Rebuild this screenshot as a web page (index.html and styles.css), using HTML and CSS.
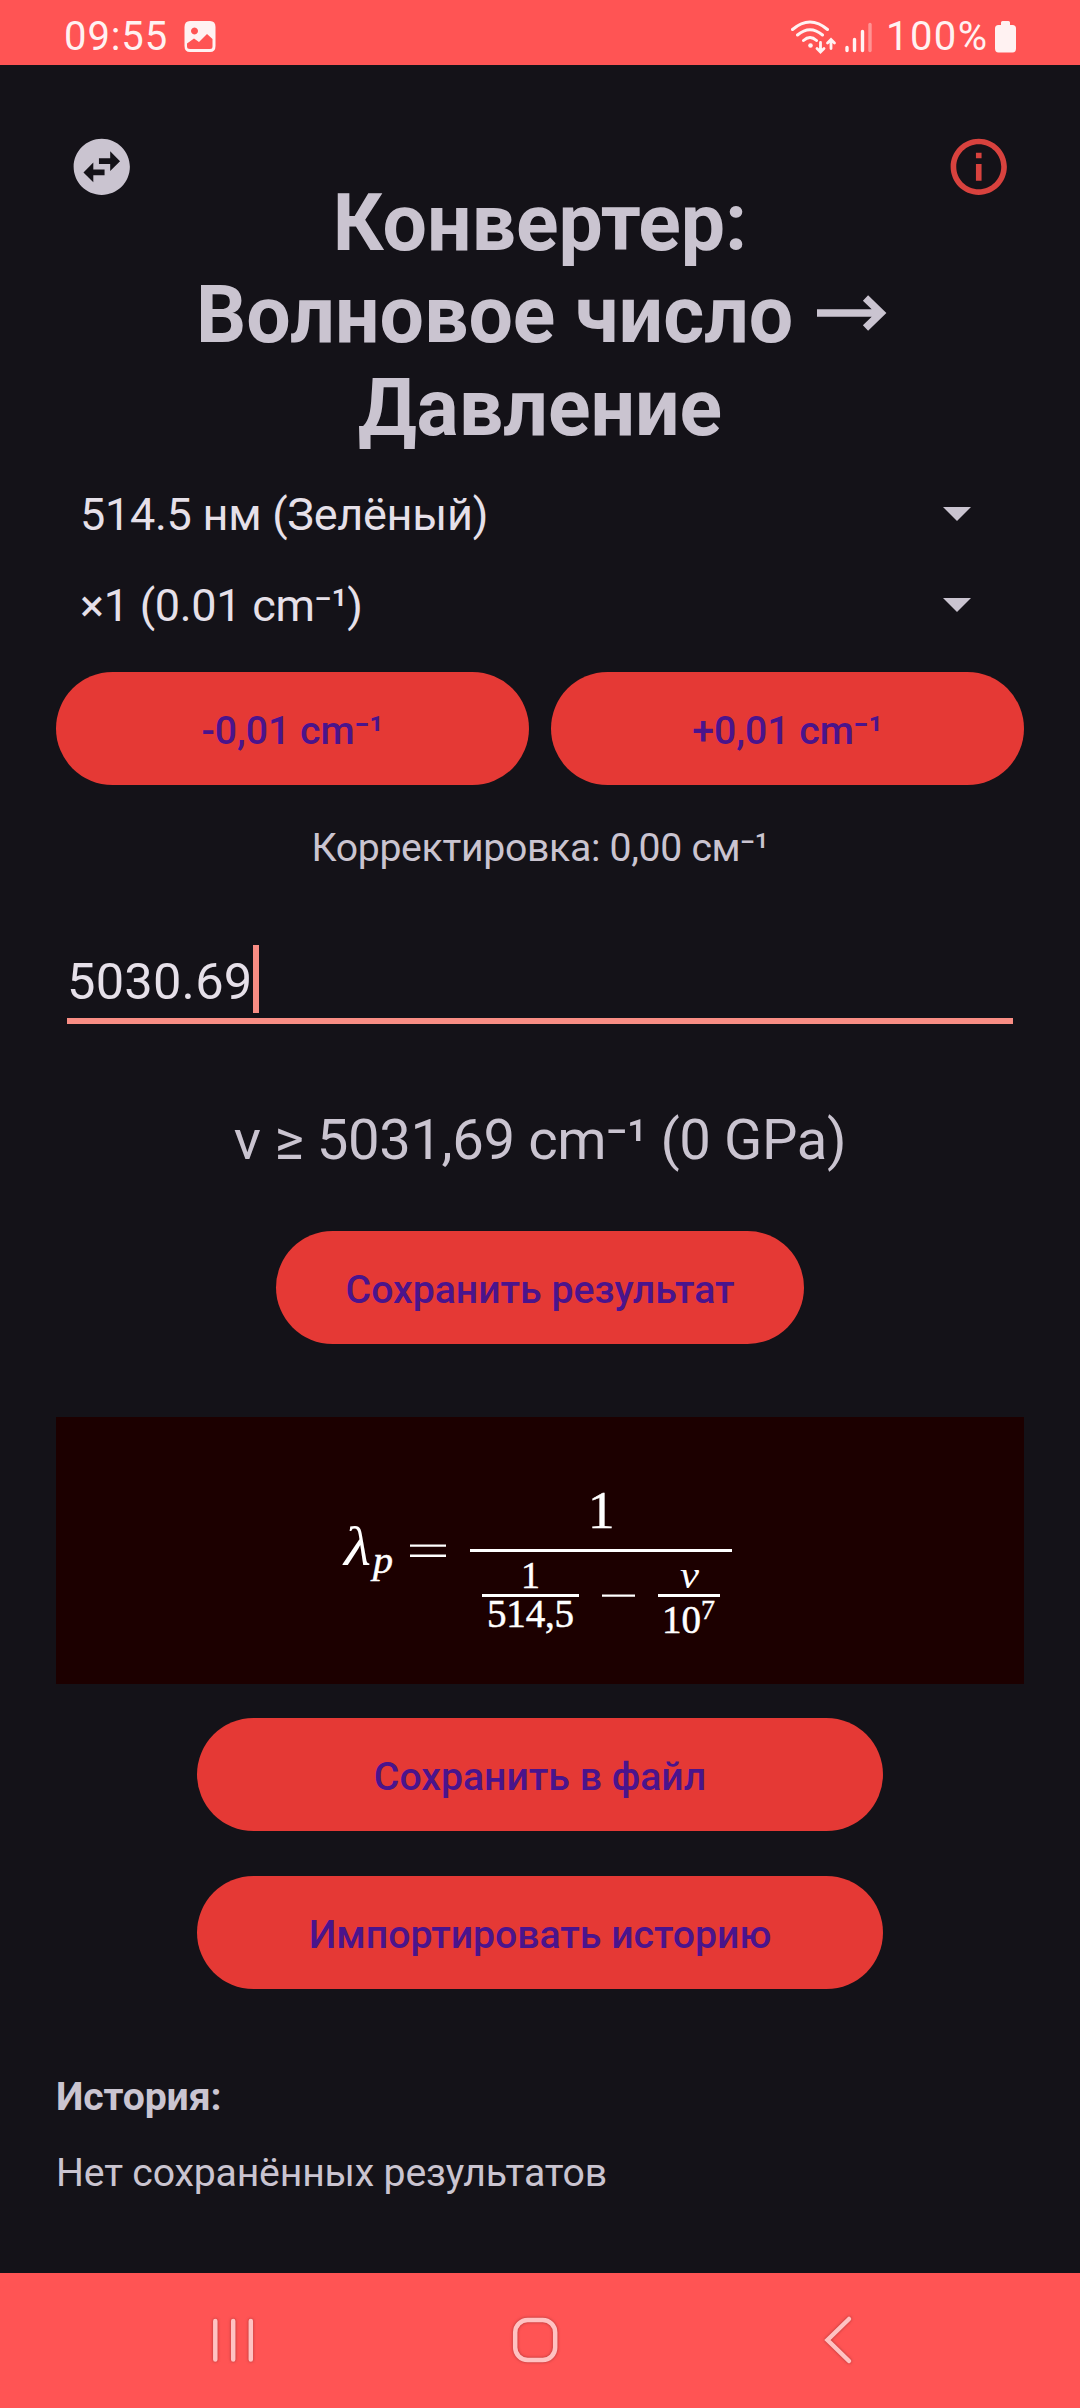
FILE: index.html
```html
<!DOCTYPE html>
<html lang="ru">
<head>
<meta charset="utf-8">
<title>Конвертер</title>
<link rel="stylesheet" href="styles.css">
</head>
<body>
<header class="status">
  <span class="clock">09:55</span>
  <svg class="photo" width="32" height="32" viewBox="0 0 32 32">
    <path fill="#fff2f2" fill-rule="evenodd" d="M6 0H26Q31.500 0 31.500 6V25Q31.500 31 26 31H6Q.5 31 .5 25V6Q.5 0 6 0ZM10.500 6.500a3.500 3.500 0 1 0 .01 0ZM3 22.500V25.500Q3 28 6 28H26Q28.500 28 28.500 25.500V18L23 13L15 21L10 17.500Z"/>
  </svg>
  <svg class="wifi" width="46" height="34" viewBox="0 0 46 34" fill="none" stroke="#fff2f2" stroke-width="3" stroke-linecap="round">
    <path d="M1.500 9.500Q19 -5.500 36.500 9.500M6.500 15Q19 4.500 31.500 15M12.500 20.500Q19 14.500 25.500 20.500"/>
    <circle cx="19.500" cy="25.500" r="2.300" fill="#fff2f2" stroke="none"/>
    <path stroke-width="2.800" d="M29.500 22.500V31M26 28.500L29.500 32L33 28.500M40 28.500V20M36.500 23L40 19.500L43.500 23"/>
  </svg>
  <svg class="signal" width="28" height="31" viewBox="0 0 28 31" stroke="#fff2f2" stroke-width="3.400" stroke-linecap="round">
    <path d="M2 25.500V28.500M9.500 17.500V28.500M17.500 9.500V28.500"/><path opacity=".4" d="M25 2.500V28.500"/>
  </svg>
  <span class="percent">100%</span>
  <svg class="battery" width="21" height="32" viewBox="0 0 21 32"><path fill="#fff2f2" d="M7.500 0h6q1.500 0 1.500 1.500V4h2.500Q21 4 21 7.500v20q0 4-3.500 4h-14Q0 31.500 0 27.500v-20Q0 4 3.500 4H6V1.500Q6 0 7.500 0z"/></svg>
</header>
<main class="screen">
  <svg class="icon swap" viewBox="0 0 24 24"><path fill="#cac4d0" d="M22 12c0-5.520-4.480-10-10-10S2 6.480 2 12s4.480 10 10 10 10-4.480 10-10zm-7-5.500l3.500 3.500-3.500 3.500V11h-4V9h4V6.500zm-6 11L5.500 14 9 10.500V13h4v2H9v2.500z"/></svg>
  <svg class="icon info" viewBox="0 0 24 24"><path fill="#d8423e" d="M11 7h2v2h-2zm0 4h2v6h-2zm1-9C6.480 2 2 6.480 2 12s4.480 10 10 10 10-4.480 10-10S17.520 2 12 2zm0 18c-4.410 0-8-3.590-8-8s3.590-8 8-8 8 3.590 8 8-3.590 8-8 8z"/></svg>
  <h1 class="title">Конвертер:<br>Волновое число <svg class="arrow" viewBox="0 0 70 36"><path fill="none" stroke="#cac4d0" stroke-width="7.500" d="M0 18H64M48.500 3L64 18L48.500 33"/></svg><br>Давление</h1>
  <div class="spinner"><span>514.5 нм (Зелёный)</span><i class="caret"></i></div>
  <div class="spinner"><span>×1 (0.01 cm⁻¹)</span><i class="caret"></i></div>
  <div class="steps">
    <button class="btn">-0,01 cm⁻¹</button>
    <button class="btn">+0,01 cm⁻¹</button>
  </div>
  <p class="adjust">Корректировка: 0,00 см⁻¹</p>
  <div class="field"><span>5030.69</span><i class="cursor"></i></div>
  <p class="result">v ≥ 5031,69 cm⁻¹ (0 GPa)</p>
  <button class="btn save">Сохранить результат</button>
  <div class="formula">
    <svg width="400" height="267" viewBox="340 1417 400 267">
      <g class="math">
        <text class="it thin" x="344" y="1565" font-size="54" textLength="27" lengthAdjust="spacingAndGlyphs">λ</text>
        <text class="it" x="373" y="1573" font-size="37" textLength="20" lengthAdjust="spacingAndGlyphs">p</text>
        <text x="588" y="1528" font-size="53">1</text>
        <text x="521" y="1588" font-size="38">1</text>
        <text x="487" y="1627" font-size="39" textLength="87">514,5</text>
        <text class="it thin" x="680" y="1588" font-size="37" textLength="19" lengthAdjust="spacingAndGlyphs">ν</text>
        <text x="662" y="1633" font-size="39">10</text>
        <text x="701" y="1619" font-size="28">7</text>
      </g>
      <path fill="#fff" d="M410 1544.500h36v2.300h-36zM410 1554.600h36v2.300h-36zM470 1549h262v3H470zM482 1594h97v3h-97zM602 1594.500h33v2.200h-33zM658 1594h62v3h-62z"/>
    </svg>
  </div>
  <button class="btn wide">Сохранить в файл</button>
  <button class="btn wide import">Импортировать историю</button>
  <h2 class="history">История:</h2>
  <p class="empty">Нет сохранённых результатов</p>
</main>
<nav class="nav">
  <svg width="50" height="56" viewBox="208 2312 50 56"><path d="M215.300 2321V2359.500M233.200 2321V2359.500M250.800 2321V2359.500"/></svg>
  <svg class="home" width="56" height="56" viewBox="507 2312 56 56"><rect x="515.200" y="2320" width="40" height="40" rx="12.500"/></svg>
  <svg width="40" height="56" viewBox="818 2312 40 56"><path d="M849 2319L827.500 2340L849 2361"/></svg>
</nav>
</body>
</html>
```
FILE: styles.css
```css
* { box-sizing: border-box; margin: 0; padding: 0; }
body {
  width: 1080px;
  height: 2408px;
  display: flex;
  flex-direction: column;
  background: #141218;
  color: #cac4d0;
  font-family: Roboto, sans-serif;
  overflow: hidden;
}
svg { display: block; flex: none; }
.status {
  height: 65px;
  flex: none;
  display: flex;
  align-items: flex-start;
  background: #ff5454;
  color: #fff2f2;
  font-size: 40px;
  line-height: 47px;
  padding: 13px 64px 0 64px;
}
.clock { width: 120px; letter-spacing: .9px; }
.photo { margin-top: 8px; }
.wifi { margin: 7px 8px 0 auto; }
.signal { margin: 9px 13px 0 0; }
.percent { width: 109px; letter-spacing: 1.400px; white-space: nowrap; }
.battery { margin-top: 8px; }
.screen {
  position: relative;
  flex: 1;
  display: flex;
  flex-direction: column;
  padding: 112px 56px 0;
}
.icon { position: absolute; top: 68px; width: 67.500px; height: 67.500px; }
.swap { left: 68px; }
.info { right: 67.500px; }
.title {
  font-size: 78.750px;
  line-height: 92.300px;
  font-weight: 700;
  text-align: center;
}
.arrow {
  display: inline-block;
  width: 70px;
  height: 36px;
  margin: 0 -3px 0 4px;
  vertical-align: 11px;
}
.spinner {
  height: 91px;
  display: flex;
  justify-content: space-between;
  align-items: center;
  padding: 0 53px 0 24px;
  color: #e6e0e9;
  font-size: 45px;
  letter-spacing: -.28px;
}
.title + .spinner { margin-top: 15px; }
.caret {
  border: 14px solid transparent;
  border-top: 14.500px solid #cac4d0;
  border-bottom: 0;
}
.steps { display: flex; gap: 22px; margin-top: 21px; }
.btn {
  height: 113px;
  flex: none;
  border: 0;
  border-radius: 57px;
  background: #e53935;
  color: #4a148c;
  font: 500 39.200px Roboto, sans-serif;
  letter-spacing: 0;
  padding-top: 5px;
}
.steps .btn { flex: 1; }
.adjust { margin-top: 40px; font-size: 39.200px; line-height: 46px; letter-spacing: -.32px; text-align: center; }
.field {
  align-self: center;
  width: 946px;
  height: 79px;
  margin-top: 74px;
  border-bottom: 6px solid #f98d84;
  display: flex;
  color: #e6e0e9;
  font-size: 50.600px;
  letter-spacing: .22px;
  line-height: 73px;
}
.cursor { width: 6px; height: 68px; background: #f98d84; }
.result { margin-top: 83px; font-size: 56.250px; line-height: 66px; letter-spacing: -.4px; text-align: center; }
.save { align-self: center; width: 528px; margin-top: 58px; }
.formula { height: 267px; margin-top: 73px; background: #1c0000; display: flex; justify-content: center; }
.math { font-family: "Liberation Serif", serif; fill: #fff; stroke: #fff; stroke-width: .5px; }
.it { font-style: italic; }
.thin { stroke: none; }
.wide { align-self: center; width: 686px; margin-top: 34px; }
.import { margin-top: 45px; }
.history { margin-top: 85px; font-size: 39.200px; line-height: 46px; font-weight: 700; letter-spacing: -.15px; }
.empty { margin-top: 30px; font-size: 39.200px; line-height: 46px; letter-spacing: -.18px; }
.nav {
  height: 135px;
  flex: none;
  display: flex;
  align-items: flex-start;
  padding: 39px 222px 0 208px;
  background: #ff5454;
}
.home { margin: 0 255px 0 249px; }
.nav svg {
  fill: none;
  stroke: #ffc2c2;
  stroke-width: 4.500;
  stroke-linecap: round;
  filter: drop-shadow(0 0 1.500px rgba(90, 20, 20, .5));
}
```
